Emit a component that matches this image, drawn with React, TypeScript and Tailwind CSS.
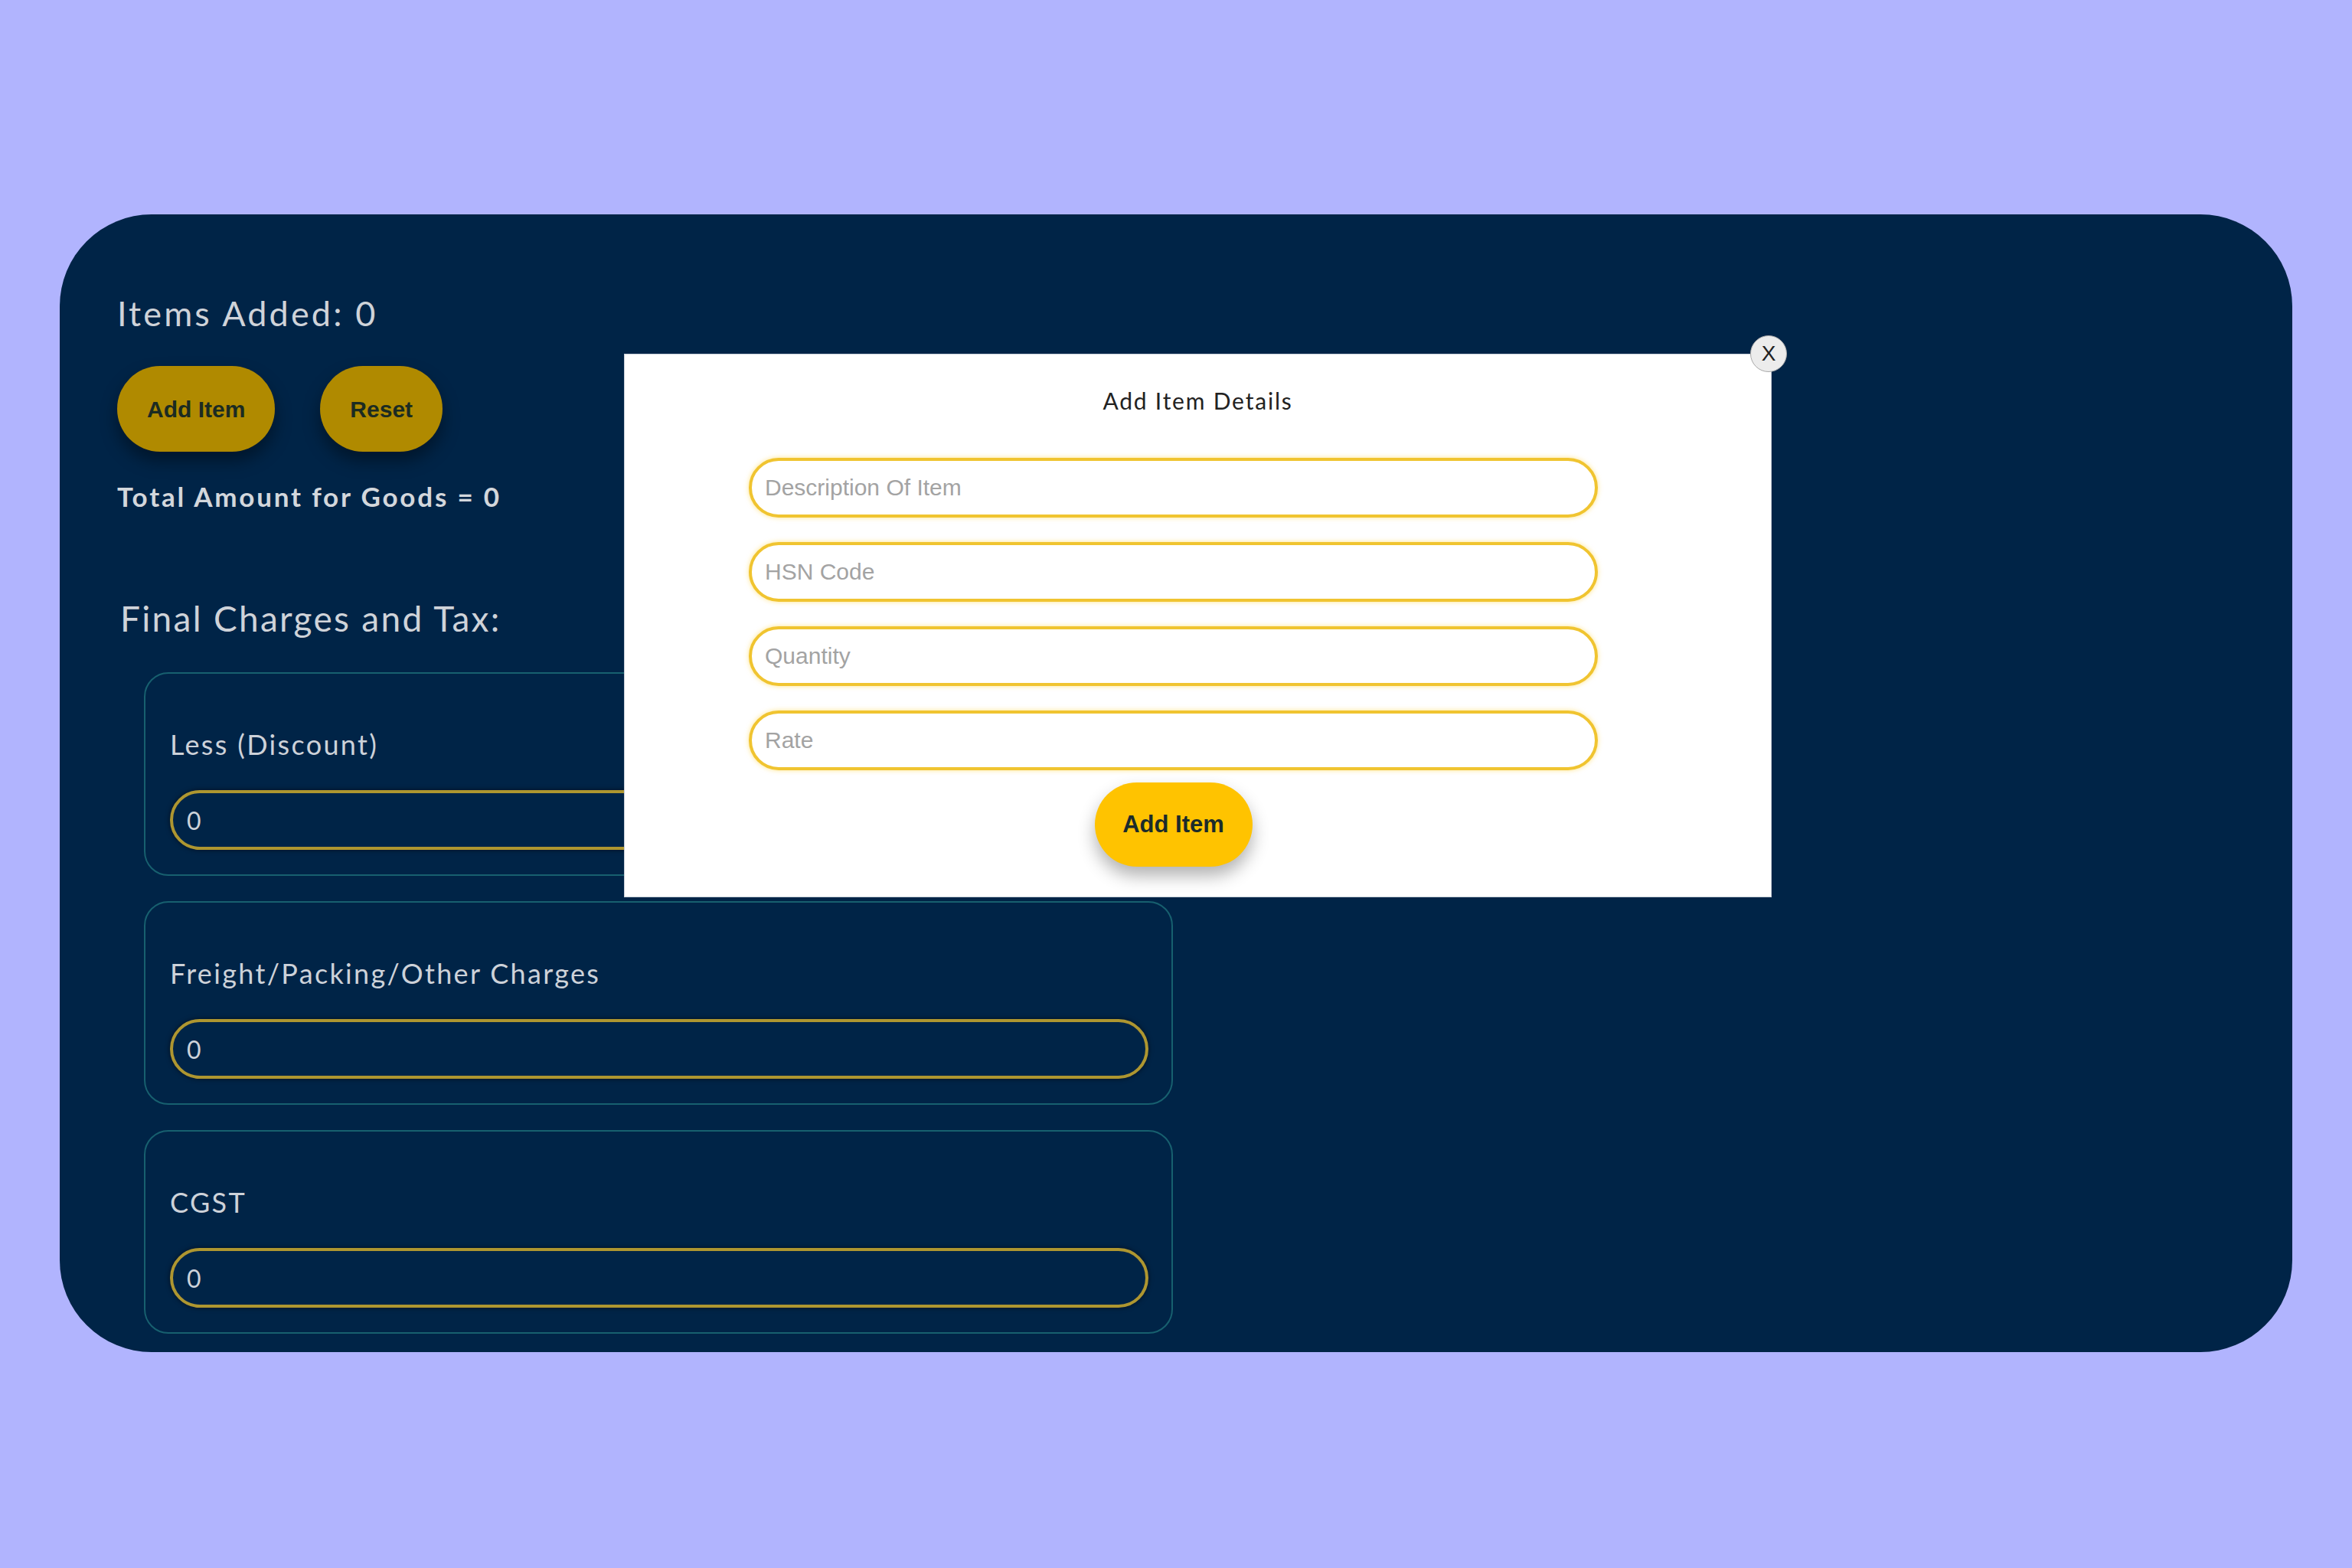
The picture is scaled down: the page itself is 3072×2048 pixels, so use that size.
import React from 'react';

const CHARGES = ['Less (Discount)', 'Freight/Packing/Other Charges', 'CGST'];
const ITEM_FIELDS = ['Description Of Item', 'HSN Code', 'Quantity', 'Rate'];

const ChargeCard = ({ label }: { label: string }) => (
  <div className="flex h-[266px] w-[1344px] flex-col rounded-[32px] border-2 border-[#17606f] px-[32px] pt-[74px]">
    <label className="text-[36px] leading-none tracking-[0.065em] text-[#cdd2d9]">{label}</label>
    <input
      readOnly
      value="0"
      className="mt-[42px] h-[78px] w-[1278px] rounded-full border-[4px] border-[#ae9630] bg-transparent px-[18px] text-[32px] text-[#cdd2d9] shadow-[0_0_6px_rgba(0,0,0,0.6)] outline-none"
    />
  </div>
);

export default function App() {
  return (
    <div className="relative h-[2048px] w-full overflow-hidden bg-[#b1b4fe] pt-[280px] font-['Lato',sans-serif]">
      {/* main panel */}
      <div className="mx-[78px] h-[1486px] overflow-hidden rounded-[120px] bg-[#002447] pl-[75px] pt-[107px]">
        <h2 className="text-[45px] leading-none tracking-[0.07em] text-[#cfd3d9]">Items Added: 0</h2>

        <div className="mt-[46px] flex gap-[59px] font-['Liberation_Sans',Arial,sans-serif]">
          <button className="h-[112px] rounded-full bg-[#b08a00] px-[39px] text-[30px] font-bold text-[#1b2b22] shadow-[0_12px_22px_rgba(0,0,0,0.4)]">
            Add Item
          </button>
          <button className="h-[112px] rounded-full bg-[#b08a00] px-[39px] text-[30px] font-bold text-[#1b2b22] shadow-[0_12px_22px_rgba(0,0,0,0.4)]">
            Reset
          </button>
        </div>

        <p className="mt-[41px] text-[35px] font-bold leading-none tracking-[0.08em] text-[#d3d7dc]">
          Total Amount for Goods = 0
        </p>

        <h2 className="ml-[4px] mt-[119px] text-[46px] leading-none tracking-[0.05em] text-[#cfd3d9]">
          Final Charges and Tax:
        </h2>

        <div className="ml-[35px] mt-[47px] flex flex-col gap-[33px]">
          {CHARGES.map((c) => (
            <ChargeCard key={c} label={c} />
          ))}
        </div>
      </div>

      {/* modal */}
      <div className="absolute left-[815px] top-[462px] h-[710px] w-[1499px] border border-[#c9cfd8] bg-white pt-[45px]">
        <button className="absolute -right-[21px] -top-[25px] flex h-[48px] w-[48px] items-center justify-center rounded-full border border-[#a9a9a9] bg-[#ececec] font-['Liberation_Sans',Arial,sans-serif] text-[28px] leading-none text-[#222]">
          X
        </button>
        <h3 className="text-center text-[30px] leading-none tracking-[0.06em] text-[#222]">Add Item Details</h3>

        <div className="ml-[162px] mt-[60px] flex w-[1109px] flex-col items-center font-['Liberation_Sans',Arial,sans-serif]">
          <div className="flex w-full flex-col gap-[32px]">
            {ITEM_FIELDS.map((f) => (
              <input
                key={f}
                placeholder={f}
                className="h-[78px] w-full rounded-full border-[4px] border-[#f0c430] bg-white px-[17px] text-[30px] text-[#333] shadow-[0_0_6px_rgba(255,205,40,0.55)] outline-none placeholder:text-[#a3a3a3]"
              />
            ))}
          </div>
          <button className="mt-[16px] h-[110px] w-[206px] rounded-full bg-[#ffc300] text-[31px] font-bold text-[#1b2b2b] shadow-[0_12px_22px_rgba(0,0,0,0.3)]">
            Add Item
          </button>
        </div>
      </div>
    </div>
  );
}
